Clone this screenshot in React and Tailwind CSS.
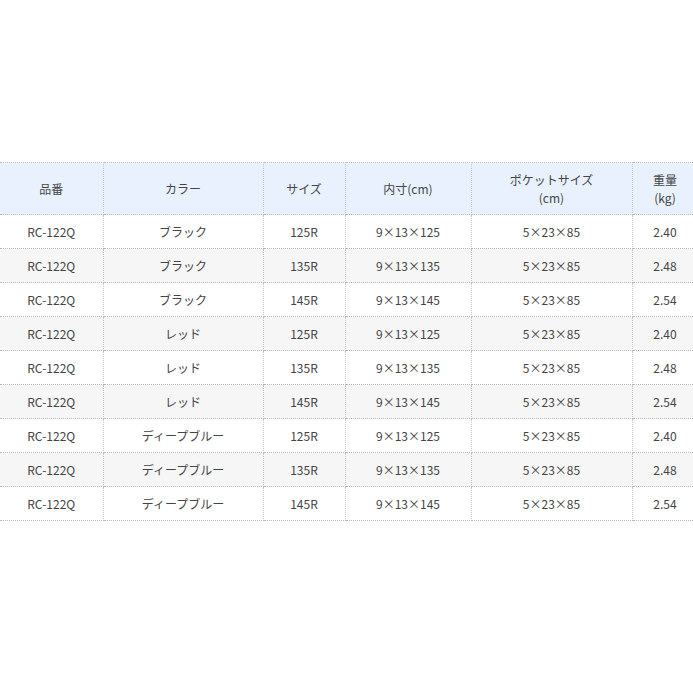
const rows = [
  ['ブラック', '125R', '9×13×125', '2.40'],
  ['ブラック', '135R', '9×13×135', '2.48'],
  ['ブラック', '145R', '9×13×145', '2.54'],
  ['レッド', '125R', '9×13×125', '2.40'],
  ['レッド', '135R', '9×13×135', '2.48'],
  ['レッド', '145R', '9×13×145', '2.54'],
  ['ディープブルー', '125R', '9×13×125', '2.40'],
  ['ディープブルー', '135R', '9×13×135', '2.48'],
  ['ディープブルー', '145R', '9×13×145', '2.54'],
]

const cell = 'border-x border-x-[#c8c8c8] border-y border-dotted border-y-[#bbb] text-center'

export default function App() {
  return (
    <div className="w-[693px] h-[693px] bg-white overflow-hidden pt-[162px] text-[12px] text-[#444]" style={{ fontFamily: '"Noto Sans CJK JP", "Liberation Sans", sans-serif' }}>
      <table className="w-[698px] border-collapse table-fixed">
        <colgroup>
          <col className="w-[103px]" />
          <col className="w-[160px]" />
          <col className="w-[82px]" />
          <col className="w-[126px]" />
          <col className="w-[161px]" />
          <col className="w-[66px]" />
        </colgroup>
        <thead>
          <tr className="h-[52px] bg-[#e8f1fd] leading-[18px]">
            <th className={`${cell} font-normal border-l-0`}>品番</th>
            <th className={`${cell} font-normal`}>カラー</th>
            <th className={`${cell} font-normal`}>サイズ</th>
            <th className={`${cell} font-normal`}>内寸(cm)</th>
            <th className={`${cell} font-normal`}>ポケットサイズ<br />(cm)</th>
            <th className={`${cell} font-normal`}>重量<br />(kg)</th>
          </tr>
        </thead>
        <tbody>
          {rows.map((r, i) => (
            <tr key={i} className={`h-[34px] ${i % 2 ? 'bg-[#f6f6f6]' : 'bg-white'}`}>
              <td className={`${cell} border-l-0`}>RC-122Q</td>
              <td className={cell}>{r[0]}</td>
              <td className={cell}>{r[1]}</td>
              <td className={cell}>{r[2]}</td>
              <td className={cell}>5×23×85</td>
              <td className={cell}>{r[3]}</td>
            </tr>
          ))}
        </tbody>
      </table>
    </div>
  )
}
